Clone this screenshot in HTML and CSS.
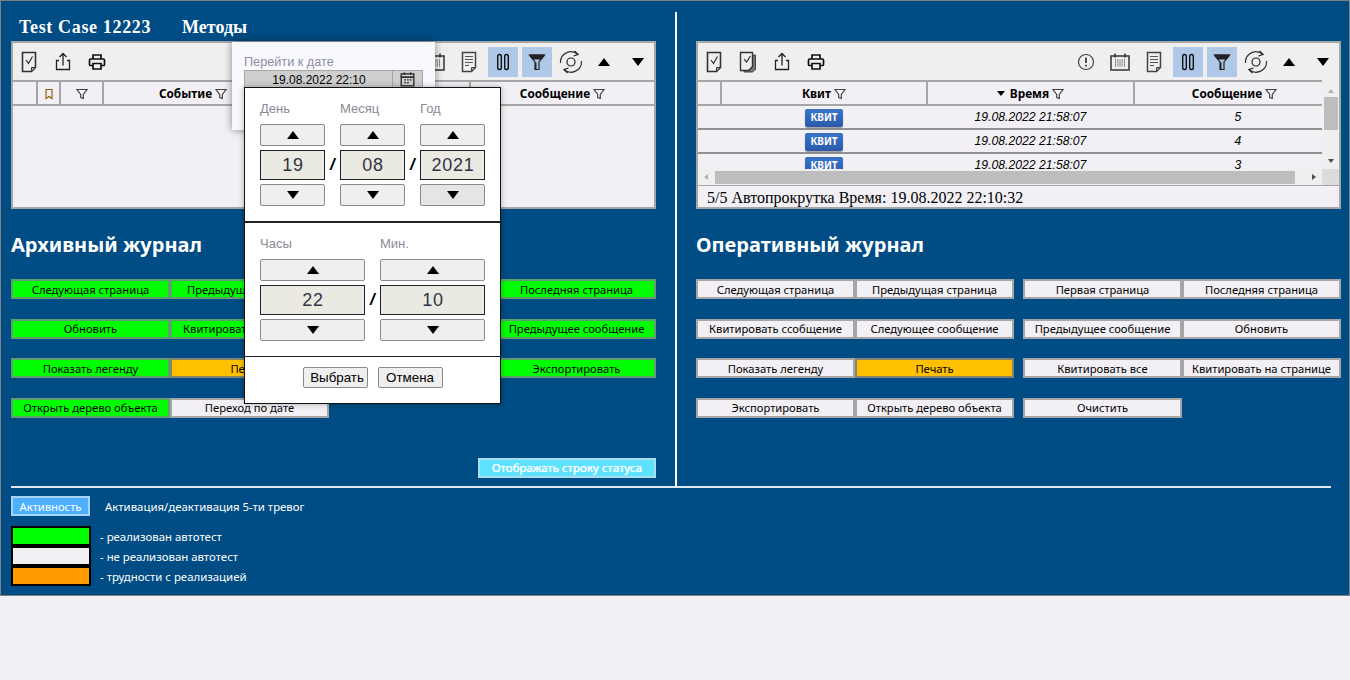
FILE: index.html
```html
<!DOCTYPE html>
<html lang="ru">
<head>
    <meta charset="UTF-8">
    <title>Test Case 12223</title>
    <link rel="stylesheet" href="styles.css">
</head>
<body>
    <svg class="sprite" width="0" height="0">
        <symbol id="i-check" viewBox="0 0 24 24"><path d="M5.500 2.500h13v15l-4 4h-9z" fill="none" stroke="#333" stroke-width="1.600"/><path d="M18.500 17.500h-4v4z" fill="#aaa" stroke="#333"/><path d="M9 10l2.500 3.500 4-7" fill="none" stroke="#222" stroke-width="1.100"/></symbol>
        <symbol id="i-check2" viewBox="0 0 24 24"><path d="M8 5h11.500v14.500l-3 2.500H8z" fill="#777" stroke="#444"/><path d="M4.500 2.500h12v14l-4 4h-8z" fill="#efefef" stroke="#333" stroke-width="1.400"/><path d="M8 9l2.500 3 4-6" fill="none" stroke="#222" stroke-width="1.100"/></symbol>
        <symbol id="i-upload" viewBox="0 0 24 24"><path d="M8 10.500H5.500v9h13v-9H16" fill="none" stroke="#222" stroke-width="1.300"/><path d="M12 15.500V3.500M8.500 7L12 3.500 15.500 7" fill="none" stroke="#222" stroke-width="1.300"/></symbol>
        <symbol id="i-print" viewBox="0 0 24 24"><path d="M8 9V5h8v4M8 15.500H5.500a1 1 0 0 1-1-1V10a1 1 0 0 1 1-1h13a1 1 0 0 1 1 1v4.500a1 1 0 0 1-1 1H16" fill="none" stroke="#111" stroke-width="1.700"/><path d="M8 13.500h8v5.500H8z" fill="none" stroke="#111" stroke-width="1.700"/></symbol>
        <symbol id="i-alert" viewBox="0 0 24 24"><circle cx="12" cy="12" r="7.500" fill="none" stroke="#444" stroke-width="1.200"/><path d="M12 7.500v5.500M12 14.800v1.800" stroke="#222" stroke-width="1.500"/></symbol>
        <symbol id="i-cal" viewBox="0 0 24 24"><path d="M3 6h18v14H3z" fill="none" stroke="#333" stroke-width="1.500"/><path d="M7 3.500v4M17 3.500v4" stroke="#333" stroke-width="1.500"/><path d="M7.500 9.500v7M9.800 9.500v7M12 9.500v7M14.200 9.500v7M16.500 9.500v7" stroke="#444" stroke-dasharray="1.200 .8"/></symbol>
        <symbol id="i-cal2" viewBox="0 0 24 24"><path d="M4 5h16v15H4z" fill="none" stroke="#222" stroke-width="1.600"/><path d="M4 9h16" stroke="#222" stroke-width="2"/><path d="M8 3v3M16 3v3" stroke="#222" stroke-width="1.800"/><path d="M8 12.500h2M11.500 12.500h2M15 12.500h2M8 16h2M11.500 16h2" stroke="#222" stroke-width="1.500"/></symbol>
        <symbol id="i-list" viewBox="0 0 24 24"><path d="M5.500 2.500h13v15l-4 4h-9z" fill="none" stroke="#444" stroke-width="1.500"/><path d="M18.500 17.500h-4v4z" fill="#999" stroke="#444"/><path d="M8 6.500h8M8 9.500h8M8 12.500h8M8 15.500h4" stroke="#555" stroke-width="1.100"/></symbol>
        <symbol id="i-pause" viewBox="0 0 24 24"><rect x="6.700" y="4.500" width="3.600" height="15" rx="1.800" fill="none" stroke="#111" stroke-width="1.400"/><rect x="13.700" y="4.500" width="3.600" height="15" rx="1.800" fill="none" stroke="#111" stroke-width="1.400"/></symbol>
        <symbol id="i-funnel" viewBox="0 0 24 24"><path d="M4.500 5h15l-5.500 7v7.500h-4V12z" fill="none" stroke="#222" stroke-width="1.200"/><path d="M4.500 4.500h15v1.500L16.500 9.500h-9L4.500 6z" fill="#222"/><path d="M10 12.500h1.500v7H10z" fill="#222"/></symbol>
        <symbol id="i-sync" viewBox="0 0 24 24"><circle cx="12" cy="12" r="4" fill="none" stroke="#222" stroke-width="1.200"/><path d="M1.500 13A10.500 10.500 0 0 1 19 4.500M22.500 11A10.500 10.500 0 0 1 5 19.500" fill="none" stroke="#333" stroke-width="1.200"/><path d="M15.500 1l3.500 3.500-4.500 1.500M8.500 23L5 19.500 9.500 18" fill="none" stroke="#222" stroke-width="1.200"/></symbol>
        <symbol id="i-mini" viewBox="0 0 12 12"><path d="M1 1.500h10L7.300 6.500v4l-2.600-1v-3z" fill="#fff" fill-opacity=".4" stroke="#444" stroke-width="1.200"/></symbol>
        <symbol id="i-mark" viewBox="0 0 12 12"><path d="M3 1.500h6v9L6 8.500l-3 2z" fill="none" stroke="#8a5a00" stroke-width="1.100"/></symbol>
    </svg>

    <div class="app">
        <div class="columns">
            <section class="col">
                <div class="title-row">
                    <h2 class="case-title wide">Test Case 12223</h2>
                    <h2 class="case-title">Методы</h2>
                </div>

                <div class="panel">
                    <div class="toolbar">
                        <span class="tool"><svg><use href="#i-check"/></svg></span>
                        <span class="tool"><svg><use href="#i-upload"/></svg></span>
                        <span class="tool"><svg><use href="#i-print"/></svg></span>
                        <span class="spacer"></span>
                        <span class="tool"><svg><use href="#i-cal"/></svg></span>
                        <span class="tool"><svg><use href="#i-list"/></svg></span>
                        <span class="tool active"><svg><use href="#i-pause"/></svg></span>
                        <span class="tool active"><svg><use href="#i-funnel"/></svg></span>
                        <span class="tool"><svg><use href="#i-sync"/></svg></span>
                        <span class="tool"><span class="tri-up"></span></span>
                        <span class="tool"><span class="tri-down"></span></span>
                    </div>
                    <table class="grid">
                        <colgroup>
                            <col class="c24"><col class="c23"><col class="c43"><col class="c180"><col class="c187"><col>
                        </colgroup>
                        <thead>
                            <tr>
                                <th></th>
                                <th><svg class="mini"><use href="#i-mark"/></svg></th>
                                <th><svg class="mini"><use href="#i-mini"/></svg></th>
                                <th>Событие <svg class="mini"><use href="#i-mini"/></svg></th>
                                <th>Время</th>
                                <th>Сообщение <svg class="mini"><use href="#i-mini"/></svg></th>
                            </tr>
                        </thead>
                    </table>
                </div>

                <h1 class="journal">Архивный журнал</h1>

                <div class="actions">
                    <button class="btn green">Следующая страница</button>
                    <button class="btn green">Предыдущая страница</button>
                    <button class="btn green gap">Первая страница</button>
                    <button class="btn green">Последняя страница</button>
                    <button class="btn green">Обновить</button>
                    <button class="btn green">Квитировать ссобщение</button>
                    <button class="btn green gap">Следующее сообщение</button>
                    <button class="btn green">Предыдущее сообщение</button>
                    <button class="btn green">Показать легенду</button>
                    <button class="btn amber">Печать</button>
                    <button class="btn green gap">Очистить</button>
                    <button class="btn green">Экспортировать</button>
                    <button class="btn green">Открыть дерево объекта</button>
                    <button class="btn plain">Переход по дате</button>
                </div>

                <div class="status-row">
                    <button class="btn cyan">Отображать строку статуса</button>
                </div>

                <div class="date-card">
                    <div class="date-label">Перейти к дате</div>
                    <div class="date-input">
                        <span class="date-value">19.08.2022 22:10</span>
                        <span class="date-icon"><svg><use href="#i-cal2"/></svg></span>
                    </div>
                </div>

                <div class="picker">
                    <div class="pick-section pick-date">
                        <div class="pick-col">
                            <label>День</label>
                            <button class="spin"><span class="tri-up"></span></button>
                            <div class="pick-value">19</div>
                            <button class="spin"><span class="tri-down"></span></button>
                        </div>
                        <div class="pick-col">
                            <label>Месяц</label>
                            <button class="spin"><span class="tri-up"></span></button>
                            <div class="pick-value">08</div>
                            <button class="spin"><span class="tri-down"></span></button>
                        </div>
                        <div class="pick-col">
                            <label>Год</label>
                            <button class="spin"><span class="tri-up"></span></button>
                            <div class="pick-value">2021</div>
                            <button class="spin hover"><span class="tri-down"></span></button>
                        </div>
                        <span class="slash s1">/</span>
                        <span class="slash s2">/</span>
                    </div>
                    <div class="pick-section pick-time">
                        <div class="pick-col">
                            <label>Часы</label>
                            <button class="spin"><span class="tri-up"></span></button>
                            <div class="pick-value">22</div>
                            <button class="spin"><span class="tri-down"></span></button>
                        </div>
                        <div class="pick-col">
                            <label>Мин.</label>
                            <button class="spin"><span class="tri-up"></span></button>
                            <div class="pick-value">10</div>
                            <button class="spin"><span class="tri-down"></span></button>
                        </div>
                        <span class="slash s3">/</span>
                    </div>
                    <div class="pick-footer">
                        <button class="pick-btn pick-ok">Выбрать</button>
                        <button class="pick-btn">Отмена</button>
                    </div>
                </div>
            </section>

            <div class="divider"></div>

            <section class="col">
                <div class="title-row"></div>

                <div class="panel">
                    <div class="toolbar">
                        <span class="tool"><svg><use href="#i-check"/></svg></span>
                        <span class="tool"><svg><use href="#i-check2"/></svg></span>
                        <span class="tool"><svg><use href="#i-upload"/></svg></span>
                        <span class="tool"><svg><use href="#i-print"/></svg></span>
                        <span class="spacer"></span>
                        <span class="tool"><svg><use href="#i-alert"/></svg></span>
                        <span class="tool"><svg><use href="#i-cal"/></svg></span>
                        <span class="tool"><svg><use href="#i-list"/></svg></span>
                        <span class="tool active"><svg><use href="#i-pause"/></svg></span>
                        <span class="tool active"><svg><use href="#i-funnel"/></svg></span>
                        <span class="tool"><svg><use href="#i-sync"/></svg></span>
                        <span class="tool"><span class="tri-up"></span></span>
                        <span class="tool"><span class="tri-down"></span></span>
                    </div>
                    <div class="scroll-area">
                        <div class="scroll-main">
                            <div class="table-clip">
                                <table class="grid grid-wide">
                                    <colgroup>
                                        <col class="c23"><col class="c206"><col class="c207"><col>
                                    </colgroup>
                                    <thead>
                                        <tr>
                                            <th></th>
                                            <th>Квит <svg class="mini"><use href="#i-mini"/></svg></th>
                                            <th><span class="sort"></span>Время <svg class="mini"><use href="#i-mini"/></svg></th>
                                            <th>Сообщение <svg class="mini"><use href="#i-mini"/></svg></th>
                                        </tr>
                                    </thead>
                                    <tbody>
                                        <tr><td></td><td><span class="ack">КВИТ</span></td><td class="it">19.08.2022 21:58:07</td><td class="it num">5</td></tr>
                                        <tr><td></td><td><span class="ack">КВИТ</span></td><td class="it">19.08.2022 21:58:07</td><td class="it num">4</td></tr>
                                        <tr><td></td><td><span class="ack">КВИТ</span></td><td class="it">19.08.2022 21:58:07</td><td class="it num">3</td></tr>
                                    </tbody>
                                </table>
                            </div>
                        </div>
                        <div class="vbar">
                            <span class="arrow-up"></span>
                            <span class="vthumb"></span>
                            <span class="arrow-down"></span>
                        </div>
                    </div>
                    <div class="hbar-row">
                        <div class="hbar">
                            <span class="arrow-left"></span>
                            <span class="hthumb"></span>
                            <span class="arrow-right"></span>
                        </div>
                        <span class="corner"></span>
                    </div>
                    <div class="status-line">5/5 Автопрокрутка Время: 19.08.2022 22:10:32</div>
                </div>

                <h1 class="journal">Оперативный журнал</h1>

                <div class="actions">
                    <button class="btn plain">Следующая страница</button>
                    <button class="btn plain">Предыдущая страница</button>
                    <button class="btn plain gap">Первая страница</button>
                    <button class="btn plain">Последняя страница</button>
                    <button class="btn plain">Квитировать ссобщение</button>
                    <button class="btn plain">Следующее сообщение</button>
                    <button class="btn plain gap">Предыдущее сообщение</button>
                    <button class="btn plain">Обновить</button>
                    <button class="btn plain">Показать легенду</button>
                    <button class="btn amber">Печать</button>
                    <button class="btn plain gap">Квитировать все</button>
                    <button class="btn plain">Квитировать на странице</button>
                    <button class="btn plain">Экспортировать</button>
                    <button class="btn plain">Открыть дерево объекта</button>
                    <button class="btn plain gap">Очистить</button>
                </div>
            </section>
        </div>

        <div class="footer">
            <div class="activity">
                <button class="btn-activity">Активность</button>
                <span>Активация/деактивация 5-ти тревог</span>
            </div>
            <div class="legend">
                <div class="legend-row"><span class="swatch sw-green"></span><span>- реализован автотест</span></div>
                <div class="legend-row"><span class="swatch sw-plain"></span><span>- не реализован автотест</span></div>
                <div class="legend-row"><span class="swatch sw-orange"></span><span>- трудности с реализацией</span></div>
            </div>
        </div>
    </div>
</body>
</html>
```

FILE: styles.css
```css
body {
    margin: 0;
    background-color: #f3f0f5;
    font-family: "Noto Sans", Arial, sans-serif;
    font-size: 12px;
    color: #000;
}
.sprite {
    position: absolute;
}
.app {
    height: 594px;
    background-color: #004c84;
    border: 1px solid #808080;
    padding: 0 0 0 10px;
}
.columns {
    display: grid;
    grid-template-columns: 645px 2px 645px;
    column-gap: 19px;
    height: 474px;
    padding-top: 11px;
}
.col {
    position: relative;
}
.divider {
    background-color: #fff;
}
.title-row {
    display: flex;
    gap: 31px;
    height: 29px;
    padding-left: 8px;
    align-items: center;
}
.case-title {
    margin: 0;
    color: #fff;
    font-family: "Liberation Serif", serif;
    font-size: 18px;
    font-weight: bold;
    padding-top: 1px;
}
.case-title.wide {
    letter-spacing: 0.65px;
}

/* panels */
.panel {
    height: 164px;
    border: 2px solid #a6a6a6;
    background-color: #f3f0f5;
    display: flex;
    flex-direction: column;
    overflow: hidden;
}
.toolbar {
    display: flex;
    flex: none;
    gap: 4px;
    height: 37px;
    padding: 0 0 0 1px;
    background-color: #efefef;
    align-items: center;
}
.spacer {
    flex: 1;
}
.tool {
    width: 30px;
    height: 30px;
    display: flex;
    align-items: center;
    justify-content: center;
}
.tool svg {
    width: 24px;
    height: 24px;
}
.tool.active {
    background-color: #b0c8e8;
}
.tri-up, .tri-down {
    display: block;
    width: 0;
    height: 0;
    margin-right: 2px;
    border-left: 6px solid transparent;
    border-right: 6px solid transparent;
}
.tri-up {
    border-bottom: 8px solid #000;
}
.tri-down {
    border-top: 8px solid #000;
}
.spin .tri-up, .spin .tri-down {
    margin-right: 0;
}

/* tables */
.grid {
    width: 100%;
    table-layout: fixed;
    border-collapse: collapse;
}
.grid-wide {
    width: 636px;
}
.c23 { width: 23px; }
.c24 { width: 24px; }
.c43 { width: 43px; }
.c180 { width: 180px; }
.c187 { width: 187px; }
.c206 { width: 206px; }
.c207 { width: 207px; }
.grid th {
    height: 22px;
    padding: 0;
    background-color: #f3f0f5;
    border-top: 2px solid #a6a6a6;
    border-bottom: 2px solid #a6a6a6;
    border-left: 2px solid #a6a6a6;
    font-size: 11.800px;
    font-weight: bold;
    text-align: center;
    vertical-align: middle;
}
.grid th:first-child {
    border-left: none;
}
.grid td {
    height: 22px;
    padding: 0;
    border-bottom: 2px solid #8f8f8f;
    text-align: center;
    vertical-align: middle;
}
.grid td.num {
    padding-left: 8px;
}
.it {
    font-family: "Liberation Sans", Arial, sans-serif;
    font-style: italic;
    font-size: 12.200px;
}
.mini {
    width: 12px;
    height: 12px;
    vertical-align: -2px;
}
.sort {
    display: inline-block;
    width: 0;
    height: 0;
    margin-right: 5px;
    border-left: 4px solid transparent;
    border-right: 4px solid transparent;
    border-top: 5px solid #000;
    vertical-align: 2px;
}
.ack {
    display: inline-block;
    width: 38px;
    height: 18px;
    line-height: 17px;
    border-radius: 2px;
    background: linear-gradient(#3a72cc, #2a5aa8);
    box-shadow: 0 1px 1px rgba(0, 0, 0, 0.35);
    color: #fff;
    font-size: 10px;
    font-weight: bold;
}

/* fake scrollbars */
.scroll-area {
    display: flex;
    flex: none;
    height: 89px;
}
.scroll-main {
    flex: 1;
    min-width: 0;
}
.table-clip {
    height: 89px;
    overflow: hidden;
}
.vbar {
    width: 17px;
    flex: none;
    background-color: #efefef;
    display: flex;
    flex-direction: column;
    align-items: center;
    box-sizing: border-box;
    padding: 9px 0 6px;
}
.vthumb {
    width: 14px;
    height: 33px;
    margin-top: 4px;
    background-color: #bdbdbd;
}
.arrow-up, .arrow-down, .arrow-left, .arrow-right {
    display: block;
    width: 0;
    height: 0;
    flex: none;
}
.arrow-up {
    border-left: 3px solid transparent;
    border-right: 3px solid transparent;
    border-bottom: 4px solid #b0b0b0;
}
.arrow-down {
    margin-top: auto;
    border-left: 3px solid transparent;
    border-right: 3px solid transparent;
    border-top: 4px solid #505050;
}
.hbar-row {
    display: flex;
    flex: none;
    height: 16px;
}
.hbar {
    flex: 1;
    display: flex;
    align-items: center;
    background-color: #efefef;
    padding: 0 6px 0 6px;
}
.arrow-left {
    border-top: 3px solid transparent;
    border-bottom: 3px solid transparent;
    border-right: 4px solid #b0b0b0;
}
.hthumb {
    width: 580px;
    height: 13px;
    margin-left: 7px;
    background-color: #bdbdbd;
}
.arrow-right {
    margin-left: auto;
    border-top: 3px solid transparent;
    border-bottom: 3px solid transparent;
    border-left: 4px solid #505050;
}
.corner {
    width: 17px;
    background-color: #dcdcdc;
}
.status-line {
    border-top: 1px solid #a6a6a6;
    padding: 2px 0 0 9px;
    font-family: "Liberation Serif", serif;
    font-size: 16px;
    line-height: 19px;
    white-space: nowrap;
}

/* action buttons */
.journal {
    margin: 22px 0 21px;
    height: 27px;
    color: #fff;
    font-size: 20px;
    line-height: 27px;
    font-weight: bold;
}
.actions {
    display: grid;
    grid-template-columns: 159px 159px 168px 159px;
    grid-auto-rows: 20px;
    row-gap: 19.500px;
}
.actions .gap {
    width: 159px;
    margin-left: 9px;
}
.btn {
    box-sizing: border-box;
    height: 20px;
    padding: 1px 0 0;
    border: 2px solid #a6a6a6;
    font-family: inherit;
    font-size: 11.200px;
    line-height: 14px;
    white-space: nowrap;
    overflow: hidden;
}
.green { background-color: #0f0; border-color: #5f9f6f; }
.amber { background-color: #ffc000; border-color: #85836f; }
.plain { background-color: #f3f0f5; border-color: #a6a6a6; }
.cyan {
    width: 178px;
    background-color: #5ce1ff;
    border-color: #a8dcef;
    color: #fff;
    font-size: 11.500px;
    text-shadow: 0 0 1px #fff;
}
.status-row {
    display: flex;
    justify-content: flex-end;
    margin-top: 40px;
}

/* date card over the panel */
.date-card {
    position: absolute;
    left: 221px;
    top: 30px;
    width: 203px;
    height: 88px;
    box-sizing: border-box;
    background-color: #f8f8ff;
    box-shadow: 0 0 8px rgba(0, 0, 0, 0.45);
    padding: 13px 12px 0;
    font-family: "Liberation Sans", Arial, sans-serif;
}
.date-label {
    color: #8f8f9f;
    font-size: 12.700px;
    line-height: 15px;
}
.date-input {
    display: flex;
    height: 17px;
    background-color: #cfcfcf;
    border: 1px solid #a6a6a6;
    border-bottom: none;
    box-sizing: border-box;
}
.date-value {
    flex: 1;
    text-align: center;
    font-size: 12px;
    line-height: 18px;
    padding-left: 1px;
}
.date-icon {
    width: 29px;
    border-left: 1px solid #a6a6a6;
    display: flex;
    justify-content: center;
    align-items: center;
}
.date-icon svg {
    width: 19px;
    height: 19px;
}

/* date picker */
.picker {
    position: absolute;
    left: 233px;
    top: 75px;
    width: 257px;
    height: 317px;
    box-sizing: border-box;
    background-color: #fff;
    border: 1px solid #111;
    box-shadow: 0 0 6px rgba(0, 0, 0, 0.3);
    font-family: "Liberation Sans", Arial, sans-serif;
}
.pick-section {
    position: relative;
    display: grid;
    column-gap: 15px;
    padding: 0 15px;
}
.pick-date {
    grid-template-columns: repeat(3, 65px);
    height: 133px;
    border-bottom: 2px solid #222;
}
.pick-time {
    grid-template-columns: repeat(2, 105px);
    height: 133px;
    border-bottom: 1px solid #222;
}
.pick-col {
    display: flex;
    flex-direction: column;
}
.pick-col label {
    height: 36px;
    padding-top: 14px;
    box-sizing: border-box;
    color: #8a8a94;
    font-size: 13px;
    line-height: 14px;
}
.spin {
    height: 22px;
    padding: 0;
    flex: none;
    display: flex;
    justify-content: center;
    align-items: center;
    background-color: #efefef;
    border: 1px solid #8a8a8a;
    border-radius: 2px;
}
.spin.hover {
    background-color: #e5e5e5;
}
.pick-value {
    height: 30px;
    margin: 4px 0;
    padding-left: 1px;
    flex: none;
    box-sizing: border-box;
    background-color: #eaeae2;
    border: 1px solid #222;
    text-align: center;
    color: #334;
    font-size: 18px;
    line-height: 28px;
    letter-spacing: 0.8px;
}
.slash {
    position: absolute;
    top: 67px;
    font-size: 17px;
    font-style: italic;
    font-weight: bold;
}
.s1 { left: 85px; }
.s2 { left: 165px; }
.s3 { left: 125px; }
.pick-footer {
    display: flex;
    justify-content: center;
    gap: 10px;
    padding-top: 10px;
}
.pick-btn {
    width: 65px;
    height: 21px;
    padding: 0;
    background-color: #efefef;
    border: 1px solid #8a8a8a;
    border-radius: 2px;
    font-family: inherit;
    font-size: 13.330px;
}
.pick-ok {
    padding-left: 4px;
}

/* bottom area */
.footer {
    width: 1320px;
    border-top: 2px solid #dfe8f0;
    color: #fff;
    font-size: 11.400px;
}
.activity {
    display: flex;
    align-items: center;
    gap: 15px;
    margin-top: 8px;
    height: 20px;
}
.btn-activity {
    width: 79px;
    height: 20px;
    padding: 0;
    background-color: #4db0ff;
    border: 2px solid #a8d4f4;
    color: #fff;
    font-family: inherit;
    font-size: 11.200px;
}
.legend {
    margin-top: 10px;
}
.legend-row {
    display: flex;
    align-items: center;
    gap: 9px;
    height: 20px;
}
.swatch {
    box-sizing: border-box;
    width: 80px;
    height: 20px;
    border: 2px solid #000;
}
.sw-green { background-color: #0f0; }
.sw-plain { background-color: #f3f0f5; }
.sw-orange { background-color: #ff9c00; }
```
